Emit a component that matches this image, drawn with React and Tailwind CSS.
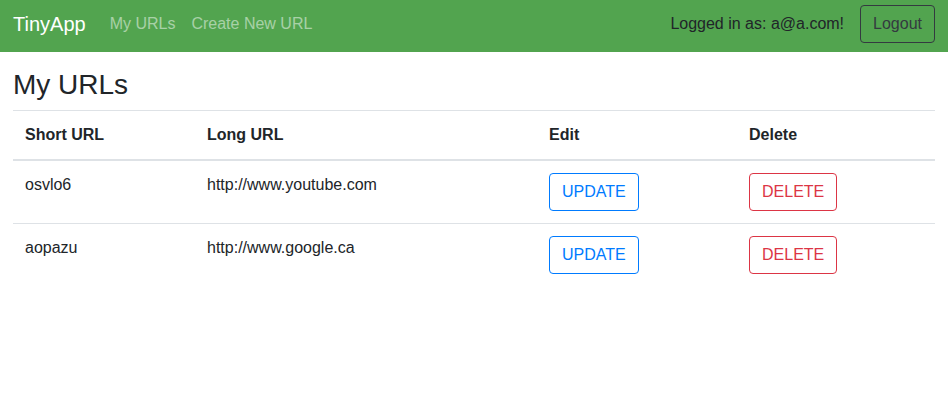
const urls = [
  {short: 'osvlo6', long: 'http://www.youtube.com'},
  {short: 'aopazu', long: 'http://www.google.ca'},
];

function Navbar() {
  return (
    <nav className="flex h-[52px] items-center bg-[#52a44f] px-[13px] pb-1">
      <a className="mr-4 text-[20px] leading-[30px] text-white">TinyApp</a>
      <a className="px-2 text-white/50">My URLs</a>
      <a className="px-2 text-white/50">Create New URL</a>
      <div className="ml-auto flex items-center gap-4">
        <span className="text-[#212529]">Logged in as: a@a.com!</span>
        <button className="h-[38px] rounded border border-[#343a40] px-3 text-[#343a40]">
          Logout
        </button>
      </div>
    </nav>
  );
}

export default function App() {
  return (
    <div className="min-h-[415px] bg-white font-['Liberation_Sans',Arial,sans-serif] text-base leading-6 text-[#212529]">
      <Navbar />
      <main className="px-[13px] pt-4">
        <h3 className="mb-2 text-[28px] font-medium leading-[1.2]">My URLs</h3>
        <table className="w-full border-collapse text-left">
          <thead>
            <tr className="border-t border-b-2 border-[#dee2e6]">
              <th className="w-[182px] p-3 font-bold">Short URL</th>
              <th className="w-[342px] p-3 font-bold">Long URL</th>
              <th className="w-[200px] p-3 font-bold">Edit</th>
              <th className="p-3 font-bold">Delete</th>
            </tr>
          </thead>
          <tbody>
            {urls.map((url) => (
              <tr key={url.short} className="border-b border-[#dee2e6] last:border-b-0">
                <td className="p-3 align-top">{url.short}</td>
                <td className="p-3 align-top">{url.long}</td>
                <td className="p-3 align-top">
                  <button className="h-[38px] rounded border border-[#007bff] px-3 text-[#007bff]">
                    UPDATE
                  </button>
                </td>
                <td className="p-3 align-top">
                  <button className="h-[38px] rounded border border-[#dc3545] px-3 text-[#dc3545]">
                    DELETE
                  </button>
                </td>
              </tr>
            ))}
          </tbody>
        </table>
      </main>
    </div>
  );
}
